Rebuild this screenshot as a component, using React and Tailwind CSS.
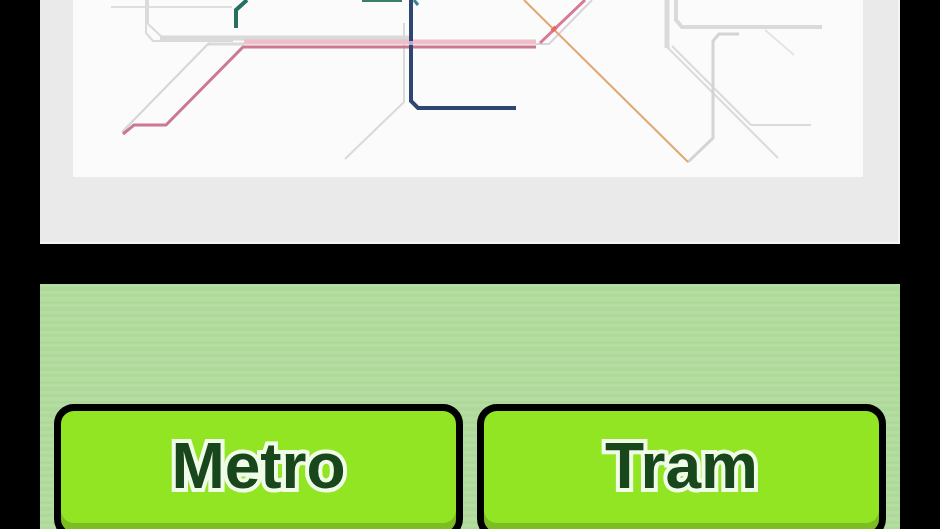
function MetroMap() {
  return (
    <svg
      viewBox="0 0 790 177"
      className="block w-full"
      fill="none"
      strokeWidth="2"
      role="img"
      aria-label="Metro network map"
    >
      <g stroke="#dadad9">
        <path d="M38 7H159" stroke="#dededd" />
        <path d="M74 0V24" strokeWidth="4" />
        <path d="M75 24L90 38" />
        <path d="M73 24V33L80 41H160" />
        <path d="M87 38H336" strokeWidth="5" />
        <path d="M135 44H171" strokeWidth="3" />
        <path d="M136 43L49 132" stroke="#d3d7d6" />
        <path d="M331 23V102L272 159" />
        <path d="M463 44H476L519 0" stroke="#dbd3dc" />
        <path d="M594 0V48" strokeWidth="5" />
        <path d="M594 47L705 158" />
        <path d="M599 46L678 125H738" />
        <path d="M603 0V20L609 27H749" strokeWidth="4" />
        <path d="M615 162L640 138V41L646 34H666" strokeWidth="3" stroke="#d4d4d2" />
        <path d="M692 30L721 55" stroke="#e4e4e3" />
      </g>
      <path d="M163 28V10L174 0" stroke="#286f63" strokeWidth="4" />
      <path d="M289 0H329" stroke="#3f7d6b" strokeWidth="4" />
      <path d="M171 42H463" stroke="#eec0ca" strokeWidth="5" />
      <path d="M50 134L61 125H93L170 47H463" stroke="#cb7890" strokeWidth="3" />
      <path d="M467 43L512 0" stroke="#d57b94" strokeWidth="3" />
      <path d="M338 0V101L345 108H443" stroke="#2f4672" strokeWidth="4" />
      <path d="M336 43H340" stroke="#b7a8d0" strokeWidth="4" />
      <path d="M341 0L345 5" stroke="#35858c" strokeWidth="3" />
      <path d="M451 0L615 162" stroke="#dfa873" />
      <path d="M479 31L483 27" stroke="#e66c60" strokeWidth="4" />
    </svg>
  );
}

function ModeButton({ children }) {
  return (
    <button
      type="button"
      className="h-[135px] flex-1 rounded-[20px] border-[7px] border-black bg-[#91e522] pb-3 text-[64px] leading-none font-bold text-[#17471b] shadow-[inset_0_-9px_0_#7dbd24] [-webkit-text-stroke:8px_#f0fce8] [paint-order:stroke_fill]"
    >
      {children}
    </button>
  );
}

export default function App() {
  return (
    <div className="flex h-screen flex-col gap-10 overflow-hidden bg-black px-10 font-['Liberation_Sans',Arial,sans-serif]">
      <section className="shrink-0 border-r-2 border-b-2 border-[#f4f4f4] bg-[#eaeaea] pr-[35px] pb-[65px] pl-[33px]">
        <div className="bg-[#fbfbfb]">
          <MetroMap />
        </div>
      </section>
      <main className="shrink-0 bg-[repeating-linear-gradient(#b5dda1_0_3px,#afd99a_3px_7px,#b5dda1_7px_10px,#afd99a_10px_13px,#b5dda1_13px_17px,#afd99a_17px_20px)] px-[14px] pt-[120px] pb-10">
        <nav aria-label="Transport mode" className="flex gap-[14px]">
          <ModeButton>Metro</ModeButton>
          <ModeButton>Tram</ModeButton>
        </nav>
      </main>
    </div>
  );
}
